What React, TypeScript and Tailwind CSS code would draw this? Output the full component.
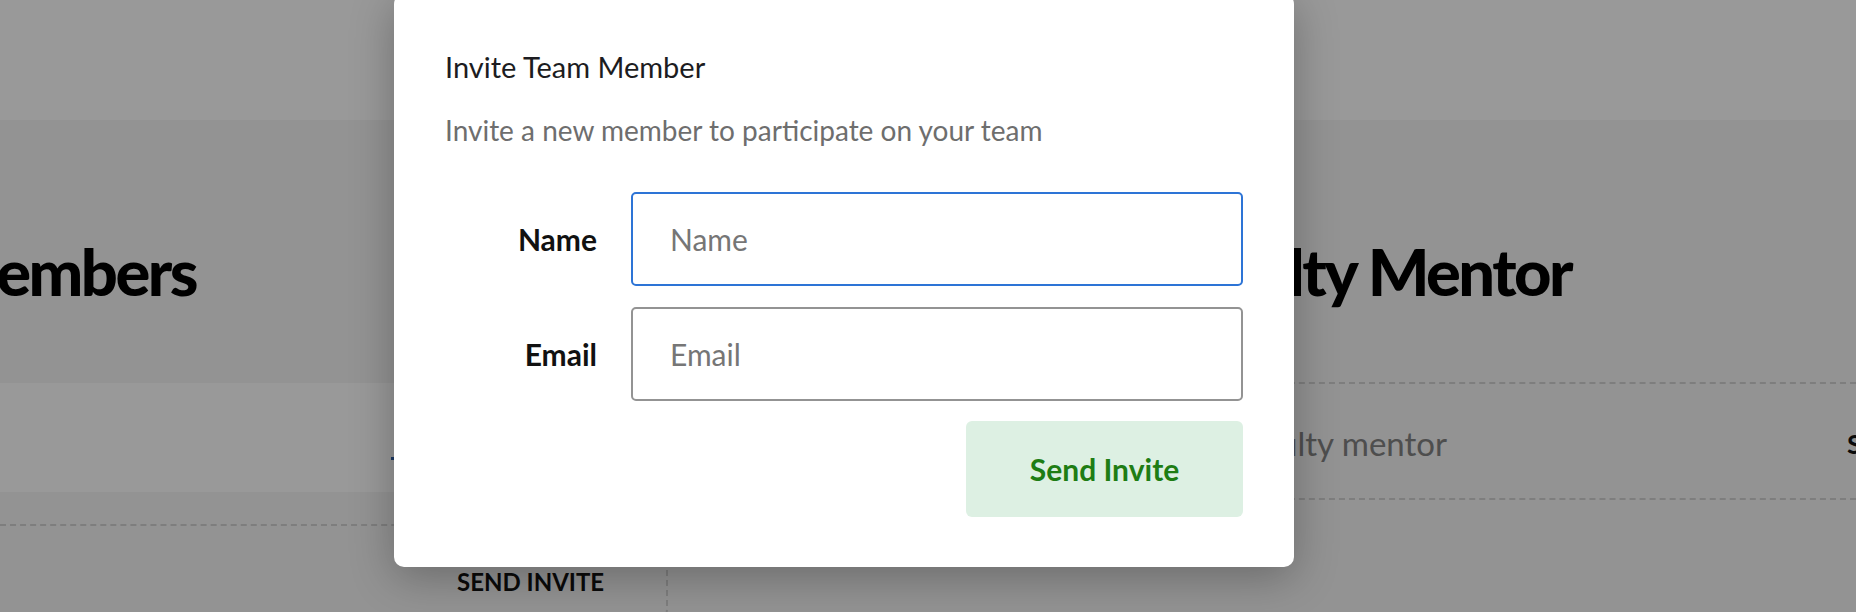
import React from "react";

export default function App() {
  return (
    <div className="relative w-[1856px] h-[612px] overflow-hidden bg-[#f5f5f5] font-['Lato',sans-serif]">
      {/* Underlying page */}
      <div className="h-[120px] bg-white" />
      <div className="flex">
        {/* Left column */}
        <div className="w-[668px] shrink-0 flex flex-col">
          <div className="h-[263px] pt-[119px]">
            <div className="flex justify-end w-[196px]">
              <h1 className="whitespace-nowrap text-[65px] leading-none font-black tracking-[-2.5px] text-black">
                Team Members
              </h1>
            </div>
          </div>
          <div className="h-[109px] bg-white pt-[74px] pl-[391px]">
            <div className="w-[4px] h-[3px] bg-[#2d5fa8]" />
          </div>
          <div className="h-[34px] border-b-2 border-dashed border-[#d2d2d2]" />
          <div className="h-[110px] border-r-2 border-dashed border-[#d2d2d2] rounded-br-[28px] pt-[44px] pl-[457px]">
            <span className="whitespace-nowrap text-[24px] leading-none font-bold text-[#111]">
              SEND INVITE
            </span>
          </div>
        </div>
        {/* Right column */}
        <div className="ml-[190px] flex-1 flex flex-col min-w-0">
          <div className="h-[262px] pt-[119px]">
            <div className="flex justify-end w-[713px]">
              <h1 className="whitespace-nowrap text-[65px] leading-none font-black tracking-[-2.5px] text-black">
                Faculty Mentor
              </h1>
            </div>
          </div>
          <div className="h-[118px] border-y-2 border-dashed border-[#d2d2d2] flex items-center pt-[4px]">
            <div className="flex justify-end w-[589px] shrink-0">
              <span className="whitespace-nowrap text-[33px] leading-none text-[#828282]">
                Faculty mentor
              </span>
            </div>
            <span className="ml-[400px] whitespace-nowrap text-[27px] leading-none font-bold text-[#111]">
              SEND INVITE
            </span>
          </div>
        </div>
      </div>

      {/* Overlay */}
      <div className="absolute inset-0 bg-black/40" />

      {/* Modal */}
      <div className="absolute left-[394px] top-[-6px] w-[900px] rounded-[10px] bg-white px-[51px] pt-[55px] pb-[50px] shadow-[0_10px_44px_rgba(0,0,0,0.28)]">
        <h2 className="text-[29px] leading-[36px] text-[#1c1c21]">Invite Team Member</h2>
        <p className="mt-[28px] text-[28px] leading-[34px] text-[#6e6e6e]">
          Invite a new member to participate on your team
        </p>
        <div className="mt-[45px] flex flex-col gap-[21px]">
          <div className="flex items-center gap-[34px]">
            <label className="w-[152px] text-right text-[30px] font-bold text-[#111]">Name</label>
            <input
              placeholder="Name"
              className="w-[612px] h-[94px] rounded-[5px] border-2 border-[#2d74d6] pl-[37px] text-[30px] text-[#222] placeholder:text-[#767676] outline-none bg-white"
            />
          </div>
          <div className="flex items-center gap-[34px]">
            <label className="w-[152px] text-right text-[30px] font-bold text-[#111]">Email</label>
            <input
              placeholder="Email"
              className="w-[612px] h-[94px] rounded-[5px] border-2 border-[#939393] pl-[37px] text-[30px] text-[#222] placeholder:text-[#767676] outline-none bg-white"
            />
          </div>
        </div>
        <div className="mt-[20px] flex justify-end">
          <button className="w-[277px] h-[96px] rounded-[6px] bg-[#ddf0e3] text-[30px] font-bold text-[#1e7d14]">
            Send Invite
          </button>
        </div>
      </div>
    </div>
  );
}
